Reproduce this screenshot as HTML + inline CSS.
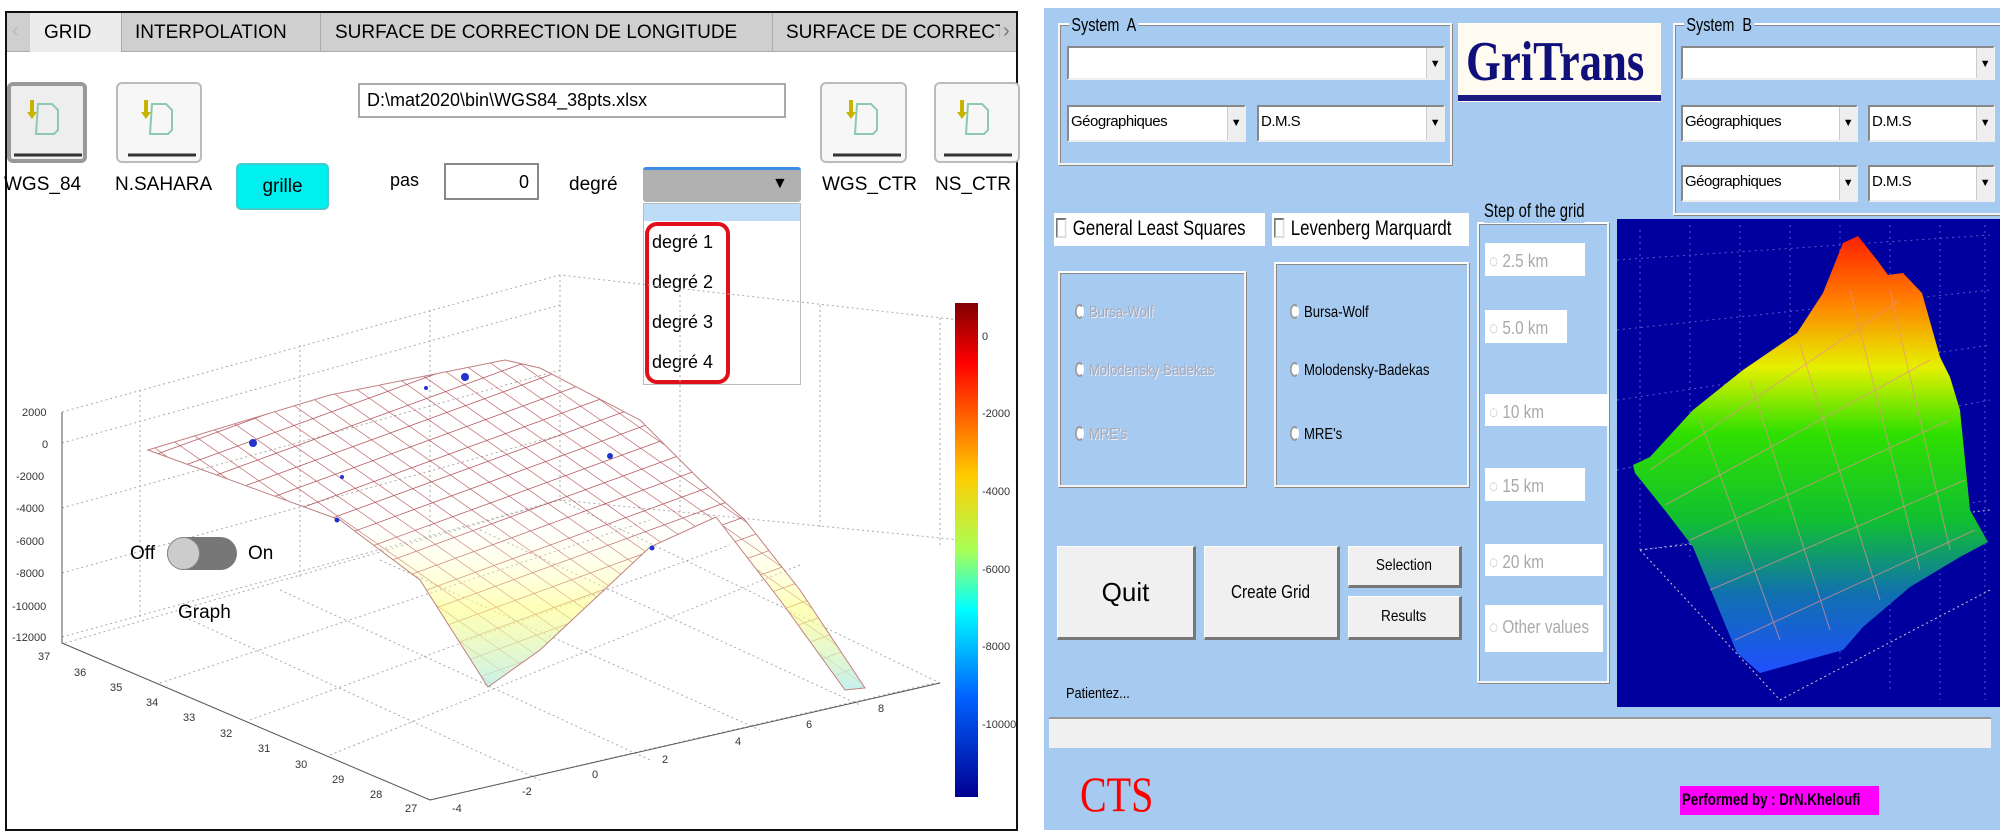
<!DOCTYPE html>
<html><head><meta charset="utf-8"><style>
*{margin:0;padding:0;box-sizing:border-box}
body{width:2000px;height:835px;background:#fff;position:relative;overflow:hidden;font-family:"Liberation Sans",sans-serif}
.a{position:absolute}
.t{position:absolute;white-space:nowrap}
.ib{position:absolute;border:2px solid #bbb;border-radius:6px;background:#f7f7f7}
.cb{position:absolute;background:#fff;border:2px solid #888;border-right-color:#eee;border-bottom-color:#eee;font-size:15px;padding:6px 2px;white-space:nowrap;overflow:hidden;letter-spacing:-.5px}
.cb i{position:absolute;right:0;top:0;bottom:0;width:17px;background:#eee;font-style:normal;font-size:11px;text-align:center;padding-top:10px;border-left:1px solid #ccc}
.grp{position:absolute;border:2px solid #f4f4f4;border-top-color:#fff;box-shadow:inset 1px 1px 0 #888,1px 1px 0 #888}
.btn{position:absolute;background:#f0f0f0;border-right:3px solid #777;border-bottom:3px solid #777;border-top:1px solid #fff;border-left:1px solid #fff;display:flex;align-items:center;justify-content:center}
.rb{position:absolute;white-space:nowrap;font-size:16px;transform:scaleX(.82);transform-origin:left}
.rb b{display:inline-block;width:11px;height:15px;border-radius:50%;border:2px solid #999;border-right-color:#fff;margin-right:6px;vertical-align:-2px;background:#fff}
.wb{position:absolute;background:#fff;color:#aaa;font-size:18px;padding:8px 4px;white-space:nowrap}
.wb span{display:inline-block;transform:scaleX(.85);transform-origin:left}
</style></head><body>
<!-- LEFT PANEL -->
<div class="a" style="left:5px;top:11px;width:1013px;height:820px;border:2px solid #111;background:#fff"></div>
<div class="a" style="left:7px;top:13px;width:1009px;height:39px;background:#cfcfcf;border-bottom:1px solid #aaa"></div>
<div class="a" style="left:30px;top:13px;width:92px;height:39px;background:#ececec"></div>
<div class="a" style="left:121px;top:13px;width:1px;height:39px;background:#aaa"></div>
<div class="a" style="left:320px;top:13px;width:1px;height:39px;background:#aaa"></div>
<div class="a" style="left:772px;top:13px;width:1px;height:39px;background:#aaa"></div>
<div class="t" style="left:12px;top:20px;font-size:20px;color:#bbb">‹</div>
<div class="t" style="left:1003px;top:20px;font-size:20px;color:#777">›</div>
<div class="t" style="left:44px;top:22px;font-size:19px">GRID</div>
<div class="t" style="left:135px;top:22px;font-size:19px">INTERPOLATION</div>
<div class="t" style="left:335px;top:22px;font-size:19px">SURFACE DE CORRECTION DE LONGITUDE</div>
<div class="t" style="left:786px;top:22px;font-size:19px;width:214px;overflow:hidden">SURFACE DE CORRECTION</div>
<!-- icon buttons -->
<div class="ib" style="left:7px;top:82px;width:80px;height:81px;border:4px solid #999;background:#eee"></div>
<div class="ib" style="left:116px;top:82px;width:86px;height:81px"></div>
<div class="ib" style="left:820px;top:82px;width:87px;height:81px"></div>
<div class="ib" style="left:934px;top:82px;width:86px;height:81px"></div>
<svg class="a" style="left:0;top:0" width="1020" height="170">
<g id="ic" fill="none"><path d="M38 104h14l6 6v20l-4 4h-18z" stroke="#8dc9b0" stroke-width="2"/><path d="M32 100v14" stroke="#c8b400" stroke-width="4"/><path d="M27 112l5 7 5-7z" fill="#c8b400"/><path d="M14 155h68" stroke="#333" stroke-width="3"/></g>
<use href="#ic" x="114"/><use href="#ic" x="819"/><use href="#ic" x="930"/>
</svg>
<div class="a" style="left:358px;top:83px;width:428px;height:35px;border:2px solid #aaa;background:#fff"></div>
<div class="t" style="left:367px;top:90px;font-size:18px">D:\mat2020\bin\WGS84_38pts.xlsx</div>
<div class="t" style="left:4px;top:174px;font-size:19px">WGS_84</div>
<div class="t" style="left:115px;top:174px;font-size:19px">N.SAHARA</div>
<div class="a" style="left:236px;top:163px;width:93px;height:47px;background:#00f0f0;border:2px solid #4cc;border-radius:5px;font-size:19px;text-align:center;padding-top:11px">grille</div>
<div class="t" style="left:390px;top:170px;font-size:18px">pas</div>
<div class="a" style="left:444px;top:163px;width:95px;height:37px;border:2px solid #888;background:#fff;font-size:18px;text-align:right;padding:7px 8px">0</div>
<div class="t" style="left:569px;top:174px;font-size:19px">degré</div>
<div class="a" style="left:643px;top:167px;width:158px;height:35px;background:#b0b0b0;border-top:3px solid #3a8ee6;border-radius:3px"></div>
<div class="t" style="left:772px;top:175px;font-size:16px">▼</div>
<div class="a" style="left:643px;top:203px;width:158px;height:182px;background:#fff;border:1px solid #bbb"></div>
<div class="a" style="left:644px;top:204px;width:156px;height:17px;background:#bcdcf8"></div>
<div class="a" style="left:645px;top:222px;width:85px;height:162px;border:4px solid #e0101a;border-radius:12px"></div>
<div class="t" style="left:652px;top:222px;font-size:18px;line-height:40px">degré 1<br>degré 2<br>degré 3<br>degré 4</div>
<div class="t" style="left:822px;top:174px;font-size:19px">WGS_CTR</div>
<div class="t" style="left:935px;top:174px;font-size:19px">NS_CTR</div>
<!-- plot -->
<svg class="a" style="left:0;top:0" width="1020" height="835">
<defs>
<linearGradient id="cbar" x1="0" y1="0" x2="0" y2="1"><stop offset="0" stop-color="#800000"/><stop offset=".12" stop-color="#ff0000"/><stop offset=".35" stop-color="#ffcc00"/><stop offset=".5" stop-color="#aaff55"/><stop offset=".62" stop-color="#00ffff"/><stop offset=".8" stop-color="#0060ff"/><stop offset="1" stop-color="#000090"/></linearGradient>
<pattern id="mesh" width="20" height="20" patternUnits="userSpaceOnUse" patternTransform="rotate(-20) skewX(35)"><path d="M0 0H20M0 0V20" stroke="#b04850" stroke-width="1.4" fill="none"/></pattern>
<linearGradient id="fade" x1="0" y1="0" x2="0" y2="1"><stop offset=".45" stop-color="#fff" stop-opacity="0"/><stop offset=".75" stop-color="#ffff88" stop-opacity=".6"/><stop offset="1" stop-color="#bfeeee" stop-opacity=".9"/></linearGradient>
</defs>
<g stroke="#aaa" stroke-dasharray="2 3" stroke-width="1" fill="none">
<path d="M62 412L560 275L960 320M62 443L560 305M62 508L560 370M62 573L560 435M62 637L560 500L960 540M560 275V500M140 390V620M300 345V580M430 310V540M680 290V520M820 305V530M940 318V545"/>
<path d="M65 643L560 500M160 683L650 520M250 720L730 545M330 755L800 565M430 800L935 683M560 500L940 683M480 530L860 705M380 560L760 730M280 590L650 760M180 615L540 780"/>
</g>
<path d="M62 412V643L430 800L940 683" stroke="#555" fill="none"/>
<polygon points="148,450 330,395 505,360 540,368 640,420 700,480 745,520 800,590 865,688 845,690 780,600 716,517 650,547 540,650 488,687 420,580 340,520" fill="url(#mesh)"/>
<polygon points="148,450 330,395 505,360 540,368 640,420 700,480 745,520 800,590 865,688 845,690 780,600 716,517 650,547 540,650 488,687 420,580 340,520" fill="url(#fade)" stroke="#c08080" stroke-width="1"/>
<g fill="#2233cc"><circle cx="253" cy="443" r="4"/><circle cx="465" cy="377" r="4"/><circle cx="610" cy="456" r="3"/><circle cx="337" cy="520" r="2.5"/><circle cx="652" cy="548" r="2.5"/><circle cx="426" cy="388" r="2"/><circle cx="342" cy="477" r="2"/></g>
<rect x="955" y="303" width="23" height="494" fill="url(#cbar)"/>
<g font-size="11" fill="#333" font-family="Liberation Sans">
<text x="982" y="340">0</text><text x="982" y="417">-2000</text><text x="982" y="495">-4000</text><text x="982" y="573">-6000</text><text x="982" y="650">-8000</text><text x="982" y="728">-10000</text>
<text x="22" y="416">2000</text><text x="42" y="448">0</text><text x="16" y="480">-2000</text><text x="16" y="512">-4000</text><text x="16" y="545">-6000</text><text x="16" y="577">-8000</text><text x="12" y="610">-10000</text><text x="12" y="641">-12000</text>
<text x="38" y="660">37</text><text x="74" y="676">36</text><text x="110" y="691">35</text><text x="146" y="706">34</text><text x="183" y="721">33</text><text x="220" y="737">32</text><text x="258" y="752">31</text><text x="295" y="768">30</text><text x="332" y="783">29</text><text x="370" y="798">28</text><text x="405" y="812">27</text>
<text x="452" y="812">-4</text><text x="522" y="795">-2</text><text x="592" y="778">0</text><text x="662" y="763">2</text><text x="735" y="745">4</text><text x="806" y="728">6</text><text x="878" y="712">8</text>
</g>
</svg>
<div class="t" style="left:130px;top:543px;font-size:19px">Off</div>
<div class="a" style="left:167px;top:537px;width:70px;height:33px;background:#777;border-radius:17px"></div>
<div class="a" style="left:167px;top:537px;width:33px;height:33px;background:#ccc;border-radius:50%;border:1px solid #888"></div>
<div class="t" style="left:248px;top:543px;font-size:19px">On</div>
<div class="t" style="left:178px;top:602px;font-size:19px">Graph</div>

<!-- RIGHT PANEL -->
<div class="a" style="left:1044px;top:8px;width:956px;height:822px;background:#a6caf0"></div>
<div class="grp" style="left:1058px;top:23px;width:394px;height:142px"></div>
<div class="t" style="left:1069px;top:15px;font-size:18px;background:#a6caf0;padding:0 3px;transform:scaleX(.8);transform-origin:left">System&nbsp; A</div>
<div class="cb" style="left:1067px;top:46px;width:378px;height:34px"><i>▼</i></div>
<div class="cb" style="left:1067px;top:105px;width:179px;height:37px">Géographiques<i>▼</i></div>
<div class="cb" style="left:1257px;top:105px;width:188px;height:37px">D.M.S<i>▼</i></div>
<div class="a" style="left:1458px;top:23px;width:203px;height:79px;background:#fffbf0"></div>
<div class="a" style="left:1458px;top:95px;width:203px;height:6px;background:#1a1a80"></div>
<div class="t" style="left:1466px;top:30px;font-family:'Liberation Serif',serif;font-weight:bold;font-size:56px;color:#10107a;transform:scaleX(.8);transform-origin:left">GriTrans</div>
<div class="grp" style="left:1673px;top:23px;width:330px;height:192px"></div>
<div class="t" style="left:1684px;top:15px;font-size:18px;background:#a6caf0;padding:0 3px;transform:scaleX(.8);transform-origin:left">System&nbsp; B</div>
<div class="cb" style="left:1681px;top:46px;width:314px;height:34px"><i>▼</i></div>
<div class="cb" style="left:1681px;top:105px;width:177px;height:37px">Géographiques<i>▼</i></div>
<div class="cb" style="left:1868px;top:105px;width:127px;height:37px">D.M.S<i>▼</i></div>
<div class="cb" style="left:1681px;top:165px;width:177px;height:37px">Géographiques<i>▼</i></div>
<div class="cb" style="left:1868px;top:165px;width:127px;height:37px">D.M.S<i>▼</i></div>
<div class="a" style="left:1054px;top:213px;width:211px;height:33px;background:#fff"></div>
<div class="t" style="left:1056px;top:217px;font-size:21px;transform:scaleX(.8);transform-origin:left"><span style="display:inline-block;width:13px;height:20px;border:2px solid #777;border-right-color:#ddd;border-bottom-color:#ddd;vertical-align:-3px;margin-right:8px"></span>General Least Squares</div>
<div class="a" style="left:1272px;top:213px;width:197px;height:33px;background:#fff"></div>
<div class="t" style="left:1274px;top:217px;font-size:21px;transform:scaleX(.8);transform-origin:left"><span style="display:inline-block;width:13px;height:20px;border:2px solid #777;border-right-color:#ddd;border-bottom-color:#ddd;vertical-align:-3px;margin-right:8px"></span>Levenberg Marquardt</div>
<div class="grp" style="left:1477px;top:222px;width:132px;height:461px"></div>
<div class="t" style="left:1484px;top:201px;font-size:19px;background:#a6caf0;transform:scaleX(.78);transform-origin:left">Step of the grid</div>
<div class="wb" style="left:1485px;top:243px;width:100px;height:33px"><span>◌ 2.5 km</span></div>
<div class="wb" style="left:1485px;top:310px;width:82px;height:33px"><span>◌ 5.0 km</span></div>
<div class="wb" style="left:1485px;top:394px;width:124px;height:32px"><span>◌ 10 km</span></div>
<div class="wb" style="left:1485px;top:468px;width:100px;height:33px"><span>◌ 15 km</span></div>
<div class="wb" style="left:1485px;top:544px;width:118px;height:32px"><span>◌ 20 km</span></div>
<div class="wb" style="left:1485px;top:605px;width:118px;height:47px;padding-top:12px"><span>◌ Other values</span></div>
<div class="grp" style="left:1058px;top:271px;width:188px;height:216px"></div>
<div class="grp" style="left:1274px;top:262px;width:195px;height:225px"></div>
<div class="rb" style="left:1075px;top:304px;color:#a8a8b0;text-shadow:1px 1px #eef"><b></b>Bursa-Wolf</div>
<div class="rb" style="left:1075px;top:362px;color:#a8a8b0;text-shadow:1px 1px #eef"><b></b>Molodensky-Badekas</div>
<div class="rb" style="left:1075px;top:426px;color:#a8a8b0;text-shadow:1px 1px #eef"><b></b>MRE's</div>
<div class="rb" style="left:1290px;top:304px"><b></b>Bursa-Wolf</div>
<div class="rb" style="left:1290px;top:362px"><b></b>Molodensky-Badekas</div>
<div class="rb" style="left:1290px;top:426px"><b></b>MRE's</div>
<div class="btn" style="left:1057px;top:546px;width:139px;height:94px;font-size:26px">Quit</div>
<div class="btn" style="left:1204px;top:546px;width:136px;height:94px;font-size:18px"><span style="transform:scaleX(.85)">Create Grid</span></div>
<div class="btn" style="left:1348px;top:546px;width:114px;height:42px;font-size:16px"><span style="transform:scaleX(.85)">Selection</span></div>
<div class="btn" style="left:1348px;top:596px;width:114px;height:44px;font-size:16px"><span style="transform:scaleX(.85)">Results</span></div>
<div class="t" style="left:1066px;top:685px;font-size:15px;transform:scaleX(.85);transform-origin:left">Patientez...</div>
<div class="a" style="left:1049px;top:717px;width:942px;height:31px;background:#f0f0f0;border-top:2px solid #999"></div>
<div class="t" style="left:1080px;top:765px;font-family:'Liberation Serif',serif;font-size:50px;color:#f00;transform:scaleX(.8);transform-origin:left">CTS</div>
<div class="a" style="left:1680px;top:786px;width:199px;height:29px;background:#ff00ff"></div>
<div class="t" style="left:1682px;top:790px;font-size:17px;font-weight:bold;transform:scaleX(.78);transform-origin:left">Performed by : DrN.Kheloufi</div>
<svg class="a" style="left:0;top:0" width="2000" height="835">
<defs><linearGradient id="surf" gradientUnits="userSpaceOnUse" x1="0" y1="236" x2="0" y2="673"><stop offset="0" stop-color="#ff2000"/><stop offset=".15" stop-color="#ff8000"/><stop offset=".3" stop-color="#e6f000"/><stop offset=".45" stop-color="#30e000"/><stop offset=".65" stop-color="#10c030"/><stop offset=".82" stop-color="#1070b0"/><stop offset="1" stop-color="#2050ff"/></linearGradient></defs>
<rect x="1617" y="219" width="383" height="488" fill="#00009e"/>
<g stroke="#5a5ac8" stroke-dasharray="2 4" fill="none"><path d="M1640 230V550M1690 225V560M1740 225V600M1790 225V640M1840 225V660M1890 225V690M1940 225V700M1985 225V700M1617 260L1990 235M1617 330L1990 290M1617 400L1990 345M1617 470L1990 400M1640 550L1990 500"/></g>
<path d="M1640 550L1780 700M1640 550L1990 510M1780 700L1990 590" stroke="#ccc" stroke-dasharray="2 3" fill="none"/>
<polygon points="1633,465 1650,457 1693,410 1743,370 1797,333 1823,293 1843,243 1858,236 1877,260 1888,275 1903,273 1922,293 1940,357 1950,377 1960,410 1970,510 1988,542 1960,557 1910,587 1863,627 1843,650 1760,673 1737,653 1693,547 1667,513 1635,473" fill="url(#surf)"/>
<g stroke="#e89090" stroke-width="1" fill="none" opacity=".7"><path d="M1650 470L1900 300M1665 505L1930 360M1690 540L1950 420M1710 590L1965 480M1735 640L1975 530M1700 420L1780 640M1750 380L1830 630M1800 345L1880 600M1850 290L1920 570M1890 290L1950 550"/></g>
</svg>
</body></html>
